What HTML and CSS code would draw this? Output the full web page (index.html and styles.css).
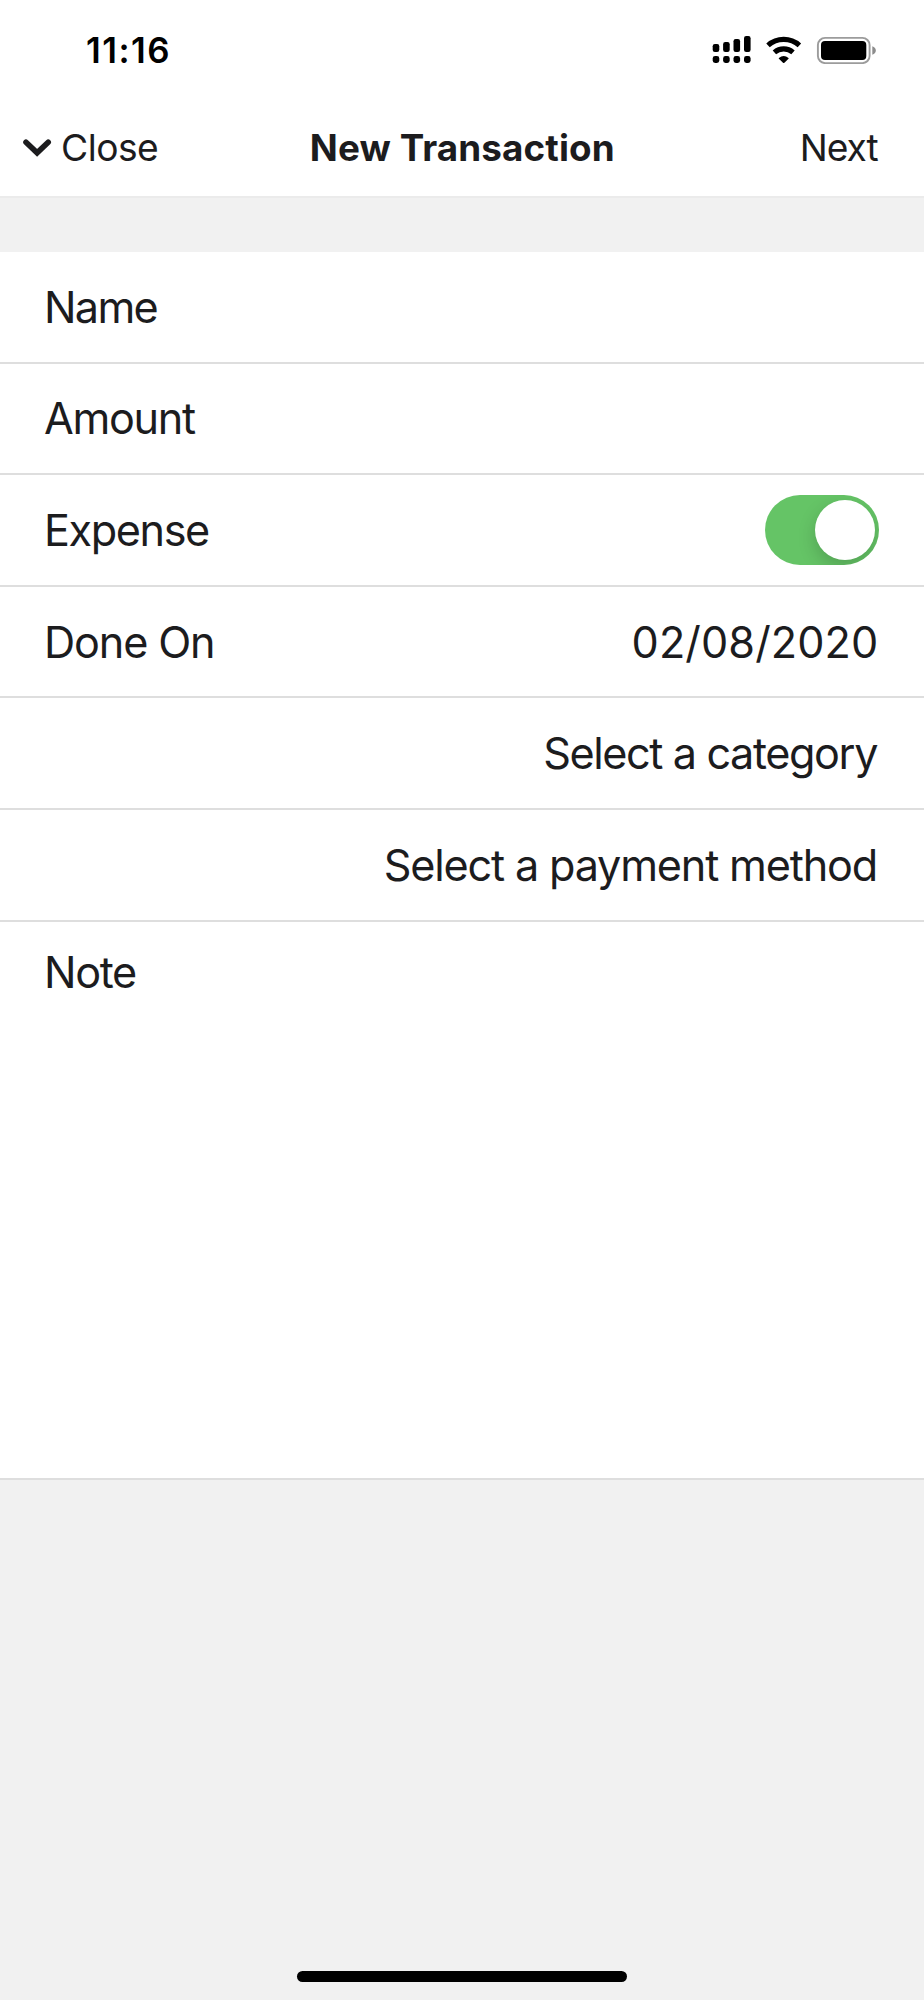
FILE: index.html
```
<!DOCTYPE html>
<html lang="en">

<head>
  <meta charset="UTF-8">
  <meta name="viewport" content="width=device-width, initial-scale=1.0">
  <title>New Transaction</title>
  <link rel="stylesheet" href="styles.css">
</head>

<body>
  <div class="status-bar">
    <span class="time">11:16</span>
    <svg class="status-icons" width="166" height="28" viewBox="0 0 166 28">
      <!-- signal -->
      <rect x="0.7" y="8" width="6.6" height="8" rx="2.2" />
      <rect x="11.1" y="6" width="6.6" height="10" rx="2.2" />
      <rect x="21.5" y="3" width="6.6" height="13" rx="2.2" />
      <rect x="32" y="0" width="6.6" height="16" rx="2.2" />
      <rect x="0.7" y="20" width="6.6" height="7" rx="2.4" />
      <rect x="11.1" y="20" width="6.6" height="7" rx="2.4" />
      <rect x="21.5" y="20" width="6.6" height="7" rx="2.4" />
      <rect x="32" y="20" width="6.6" height="7" rx="2.4" />
      <!-- wifi -->
      <path class="wifi-arc" d="M56 9.4a23.5 23.5 0 0 1 31.4 0M62.4 16.4a14.2 14.2 0 0 1 18.6 0" />
      <path d="M66.9 21.9a7.7 7.7 0 0 1 9.6 0q.4.4 0 .8l-4.1 4.1q-.7.6-1.4 0l-4.1-4.1q-.4-.4 0-.8z" />
      <!-- battery -->
      <rect class="battery-case" x="105.9" y="1.9" width="51.7" height="25.2" rx="7.2" />
      <rect x="109" y="5" width="45.3" height="19" rx="4" />
      <path class="battery-cap" d="M160.3 10.2q3.5 1.2 3.5 4.3t-3.5 4.3z" />
    </svg>
  </div>

  <nav class="nav-bar">
    <a class="close">
      <svg width="30" height="22" viewBox="0 0 30 22">
        <path d="M4 5.2l11.1 10.6L26.2 5.2" />
      </svg>
      <span>Close</span>
    </a>
    <h1 class="title">New Transaction</h1>
    <a class="next">Next</a>
  </nav>

  <main class="form">
    <div class="row"><span class="label-name">Name</span></div>
    <div class="row"><span class="label-amount">Amount</span></div>
    <div class="row">
      <span>Expense</span>
      <span class="switch"><span class="thumb"></span></span>
    </div>
    <div class="row">
      <span class="label-date">Done On</span>
      <span class="value date">02/08/2020</span>
    </div>
    <div class="row"><span class="value">Select a category</span></div>
    <div class="row"><span class="value method">Select a payment method</span></div>
    <div class="row note"><span>Note</span></div>
  </main>

  <div class="home-indicator"></div>
</body>

</html>
```
FILE: styles.css
```
* {
  box-sizing: border-box;
}

body {
  display: flex;
  flex-direction: column;
  height: 2000px;
  margin: 0;
  background-color: #f1f1f1;
  color: #1c1c1e;
  font-family: Inter, "Liberation Sans", sans-serif;
}

.status-bar {
  display: flex;
  justify-content: space-between;
  align-items: center;
  height: 100px;
  padding: 0 46px 0 86px;
  background-color: #fff;
  color: #000;
}

.time {
  font-size: 34.8px;
  font-weight: 600;
  letter-spacing: 1.5px;
}

.wifi-arc {
  fill: none;
  stroke: #000;
  stroke-width: 5.2;
}

.battery-case {
  fill: none;
  stroke: #9c9c9c;
  stroke-width: 1.9;
}

.battery-cap {
  fill: #8c8c8c;
}

.nav-bar {
  display: grid;
  grid-template-columns: 1fr auto 1fr;
  align-items: center;
  height: 98px;
  padding: 0 45.5px 1px 22px;
  border-bottom: 2px solid #ebebeb;
  background-color: #fff;
  font-size: 37.2px;
}

.close {
  display: flex;
  align-items: center;
  gap: 9px;
  letter-spacing: -0.52px;
}

.close svg {
  fill: none;
  stroke: #1c1c1e;
  stroke-width: 5.6;
  stroke-linecap: round;
}

.title {
  margin: 0 -12px 0 12px;
  font-size: 36.8px;
  font-weight: 700;
  letter-spacing: 0.12px;
}

.next {
  justify-self: end;
  letter-spacing: -1.1px;
  margin-right: 1px;
}

.form {
  margin-top: 54px;
  background-color: #fff;
}

.row {
  display: flex;
  justify-content: space-between;
  align-items: center;
  height: 111.6px;
  padding: 0 44.6px 0 44px;
  border-bottom: 2px solid #dedede;
  font-size: 43.2px;
  line-height: 52px;
  letter-spacing: -1.4px;
}

.label-name {
  letter-spacing: -1.7px;
}

.label-amount {
  letter-spacing: -1.3px;
}

.label-date {
  letter-spacing: -1.15px;
}

.value {
  margin-left: auto;
  margin-right: 2.4px;
}

.date {
  margin-right: 1px;
  letter-spacing: 0.1px;
}

.method {
  letter-spacing: -1.18px;
}

.switch {
  display: flex;
  justify-content: flex-end;
  width: 114px;
  height: 69.4px;
  padding: 4.5px;
  border-radius: 35px;
  background-color: #65c466;
  overflow: hidden;
}

.thumb {
  width: 60.4px;
  height: 60.4px;
  border-radius: 50%;
  background-color: #fff;
  box-shadow: 0 7px 18px rgba(0, 0, 0, 0.18);
}

.note {
  align-items: flex-start;
  height: 558px;
  padding-top: 24px;
}

.home-indicator {
  width: 330px;
  height: 11px;
  margin: auto auto 18px;
  border-radius: 6px;
  background-color: #000;
}
```
